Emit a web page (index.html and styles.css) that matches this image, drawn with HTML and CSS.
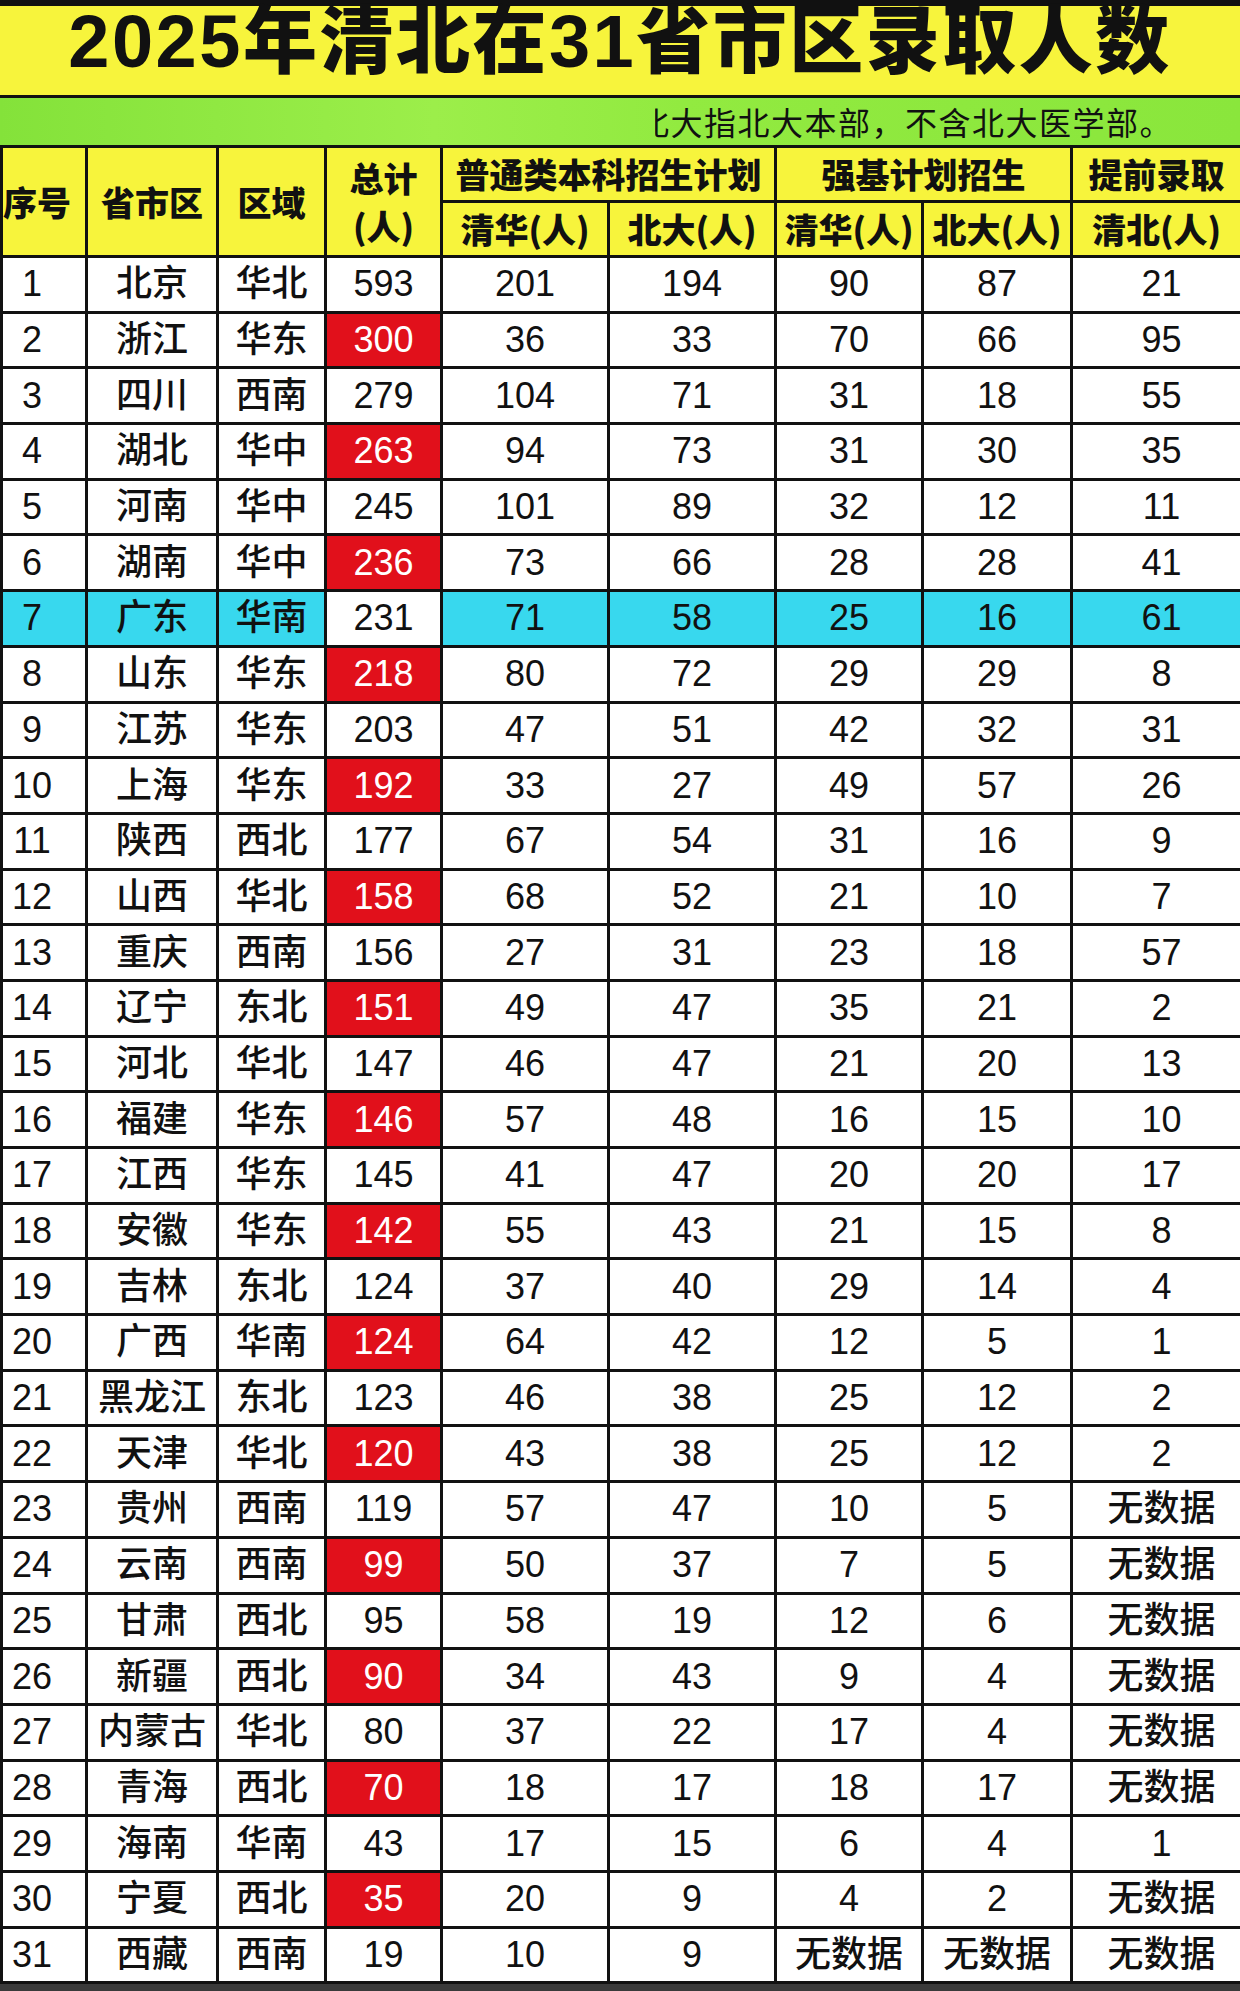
FILE: index.html
```html
<!DOCTYPE html>
<html lang="zh-CN">
<head>
<meta charset="utf-8">
<title>2025年清北在31省市区录取人数</title>
<link rel="stylesheet" href="styles.css">
</head>
<body>
<div class="page">
  <header class="title">2025年清北在31省市区录取人数</header>
  <div class="note"><div class="note-clip"><span class="note-text">北大指北大本部，不含北大医学部。</span></div></div>
  <table class="grid">
    <colgroup>
      <col class="c1"><col class="c2"><col class="c3"><col class="c4"><col class="c5"><col class="c6"><col class="c7"><col class="c8"><col class="c9">
    </colgroup>
    <thead>
      <tr class="h1">
        <th rowspan="2" class="idx">序号</th>
        <th rowspan="2">省市区</th>
        <th rowspan="2">区域</th>
        <th rowspan="2" class="two">总计<br>(人)</th>
        <th colspan="2">普通类本科招生计划</th>
        <th colspan="2">强基计划招生</th>
        <th>提前录取</th>
      </tr>
      <tr class="h2">
        <th>清华(人)</th><th>北大(人)</th><th>清华(人)</th><th>北大(人)</th><th>清北(人)</th>
      </tr>
    </thead>
    <tbody>
      <tr><td class="idx">1</td><td>北京</td><td>华北</td><td>593</td><td>201</td><td>194</td><td>90</td><td>87</td><td class="last">21</td></tr>
      <tr><td class="idx">2</td><td>浙江</td><td>华东</td><td class="red">300</td><td>36</td><td>33</td><td>70</td><td>66</td><td class="last">95</td></tr>
      <tr><td class="idx">3</td><td>四川</td><td>西南</td><td>279</td><td>104</td><td>71</td><td>31</td><td>18</td><td class="last">55</td></tr>
      <tr><td class="idx">4</td><td>湖北</td><td>华中</td><td class="red">263</td><td>94</td><td>73</td><td>31</td><td>30</td><td class="last">35</td></tr>
      <tr><td class="idx">5</td><td>河南</td><td>华中</td><td>245</td><td>101</td><td>89</td><td>32</td><td>12</td><td class="last">11</td></tr>
      <tr><td class="idx">6</td><td>湖南</td><td>华中</td><td class="red">236</td><td>73</td><td>66</td><td>28</td><td>28</td><td class="last">41</td></tr>
      <tr class="hl"><td class="idx">7</td><td>广东</td><td>华南</td><td class="plain">231</td><td>71</td><td>58</td><td>25</td><td>16</td><td class="last">61</td></tr>
      <tr><td class="idx">8</td><td>山东</td><td>华东</td><td class="red">218</td><td>80</td><td>72</td><td>29</td><td>29</td><td class="last">8</td></tr>
      <tr><td class="idx">9</td><td>江苏</td><td>华东</td><td>203</td><td>47</td><td>51</td><td>42</td><td>32</td><td class="last">31</td></tr>
      <tr><td class="idx">10</td><td>上海</td><td>华东</td><td class="red">192</td><td>33</td><td>27</td><td>49</td><td>57</td><td class="last">26</td></tr>
      <tr><td class="idx">11</td><td>陕西</td><td>西北</td><td>177</td><td>67</td><td>54</td><td>31</td><td>16</td><td class="last">9</td></tr>
      <tr><td class="idx">12</td><td>山西</td><td>华北</td><td class="red">158</td><td>68</td><td>52</td><td>21</td><td>10</td><td class="last">7</td></tr>
      <tr><td class="idx">13</td><td>重庆</td><td>西南</td><td>156</td><td>27</td><td>31</td><td>23</td><td>18</td><td class="last">57</td></tr>
      <tr><td class="idx">14</td><td>辽宁</td><td>东北</td><td class="red">151</td><td>49</td><td>47</td><td>35</td><td>21</td><td class="last">2</td></tr>
      <tr><td class="idx">15</td><td>河北</td><td>华北</td><td>147</td><td>46</td><td>47</td><td>21</td><td>20</td><td class="last">13</td></tr>
      <tr><td class="idx">16</td><td>福建</td><td>华东</td><td class="red">146</td><td>57</td><td>48</td><td>16</td><td>15</td><td class="last">10</td></tr>
      <tr><td class="idx">17</td><td>江西</td><td>华东</td><td>145</td><td>41</td><td>47</td><td>20</td><td>20</td><td class="last">17</td></tr>
      <tr><td class="idx">18</td><td>安徽</td><td>华东</td><td class="red">142</td><td>55</td><td>43</td><td>21</td><td>15</td><td class="last">8</td></tr>
      <tr><td class="idx">19</td><td>吉林</td><td>东北</td><td>124</td><td>37</td><td>40</td><td>29</td><td>14</td><td class="last">4</td></tr>
      <tr><td class="idx">20</td><td>广西</td><td>华南</td><td class="red">124</td><td>64</td><td>42</td><td>12</td><td>5</td><td class="last">1</td></tr>
      <tr><td class="idx">21</td><td>黑龙江</td><td>东北</td><td>123</td><td>46</td><td>38</td><td>25</td><td>12</td><td class="last">2</td></tr>
      <tr><td class="idx">22</td><td>天津</td><td>华北</td><td class="red">120</td><td>43</td><td>38</td><td>25</td><td>12</td><td class="last">2</td></tr>
      <tr><td class="idx">23</td><td>贵州</td><td>西南</td><td>119</td><td>57</td><td>47</td><td>10</td><td>5</td><td class="last">无数据</td></tr>
      <tr><td class="idx">24</td><td>云南</td><td>西南</td><td class="red">99</td><td>50</td><td>37</td><td>7</td><td>5</td><td class="last">无数据</td></tr>
      <tr><td class="idx">25</td><td>甘肃</td><td>西北</td><td>95</td><td>58</td><td>19</td><td>12</td><td>6</td><td class="last">无数据</td></tr>
      <tr><td class="idx">26</td><td>新疆</td><td>西北</td><td class="red">90</td><td>34</td><td>43</td><td>9</td><td>4</td><td class="last">无数据</td></tr>
      <tr><td class="idx">27</td><td>内蒙古</td><td>华北</td><td>80</td><td>37</td><td>22</td><td>17</td><td>4</td><td class="last">无数据</td></tr>
      <tr><td class="idx">28</td><td>青海</td><td>西北</td><td class="red">70</td><td>18</td><td>17</td><td>18</td><td>17</td><td class="last">无数据</td></tr>
      <tr><td class="idx">29</td><td>海南</td><td>华南</td><td>43</td><td>17</td><td>15</td><td>6</td><td>4</td><td class="last">1</td></tr>
      <tr><td class="idx">30</td><td>宁夏</td><td>西北</td><td class="red">35</td><td>20</td><td>9</td><td>4</td><td>2</td><td class="last">无数据</td></tr>
      <tr><td class="idx">31</td><td>西藏</td><td>西南</td><td>19</td><td>10</td><td>9</td><td>无数据</td><td>无数据</td><td class="last">无数据</td></tr>
    </tbody>
  </table>
  <div class="footer-bar"></div>
</div>
</body>
</html>
```

FILE: styles.css
```css
html, body {
  margin: 0;
  padding: 0;
  background: #ffffff;
}

.page {
  width: 1240px;
  height: 1991px;
  overflow: hidden;
  display: flex;
  flex-direction: column;
}

.title {
  box-sizing: border-box;
  height: 98px;
  border-top: 6px solid #111;
  border-bottom: 3px solid #111;
  background: #f7f43c;
  font-family: "Liberation Sans", "Noto Sans CJK SC", sans-serif;
  font-weight: 900;
  font-size: 74px;
  line-height: 72px;
  letter-spacing: 2.5px;
  text-align: center;
  color: #111;
  white-space: nowrap;
}

.note {
  box-sizing: border-box;
  height: 47px;
  background: linear-gradient(90deg, #84e23a 0%, #9cee4a 35%, #92ea40 55%, #8ae63c 100%);
  display: flex;
  padding-left: 655px;
}

.note-clip {
  flex: 1;
  overflow: hidden;
  white-space: nowrap;
  font-family: "Noto Sans CJK SC", sans-serif;
  font-size: 32px;
  line-height: 47px;
  letter-spacing: 1.5px;
  color: #111;
}

.note-text {
  display: inline-block;
  margin-left: -18px;
}

.grid {
  width: 1240px;
  table-layout: fixed;
  border-collapse: collapse;
  font-family: "Liberation Sans", "Noto Sans CJK SC", sans-serif;
  color: #111;
}

.c1 { width: 85px; }
.c2 { width: 131px; }
.c3 { width: 108px; }
.c4 { width: 116px; }
.c5 { width: 167px; }
.c6 { width: 167px; }
.c7 { width: 147px; }
.c8 { width: 149px; }
.c9 { width: 170px; }

.grid th,
.grid td {
  border: 3px solid #111;
  padding: 0;
  text-align: center;
  vertical-align: middle;
  white-space: nowrap;
  overflow: hidden;
}

.grid th {
  background: #f7f43c;
  font-family: "Noto Sans CJK SC", sans-serif;
  font-weight: 900;
  font-size: 34px;
  line-height: 40px;
}

.grid thead tr.h1 { height: 55px; }
.grid thead tr.h2 { height: 55px; }

.grid th.two {
  line-height: 48px;
}

.grid td {
  background: #ffffff;
  font-size: 36px;
  font-weight: 500;
  line-height: 40px;
  height: 49px;
}

.grid tbody tr { height: 55.7px; }

.grid .idx {
  padding-right: 24px;
}

.grid td.last {
  padding-left: 10px;
}

.grid td.red {
  background: #e1101b;
  color: #ffffff;
}

.grid tr.hl td {
  background: #38d8ee;
}

.grid tr.hl td.plain {
  background: #ffffff;
}

.footer-bar {
  flex: 1;
  background: #3a3a3a;
}
```
